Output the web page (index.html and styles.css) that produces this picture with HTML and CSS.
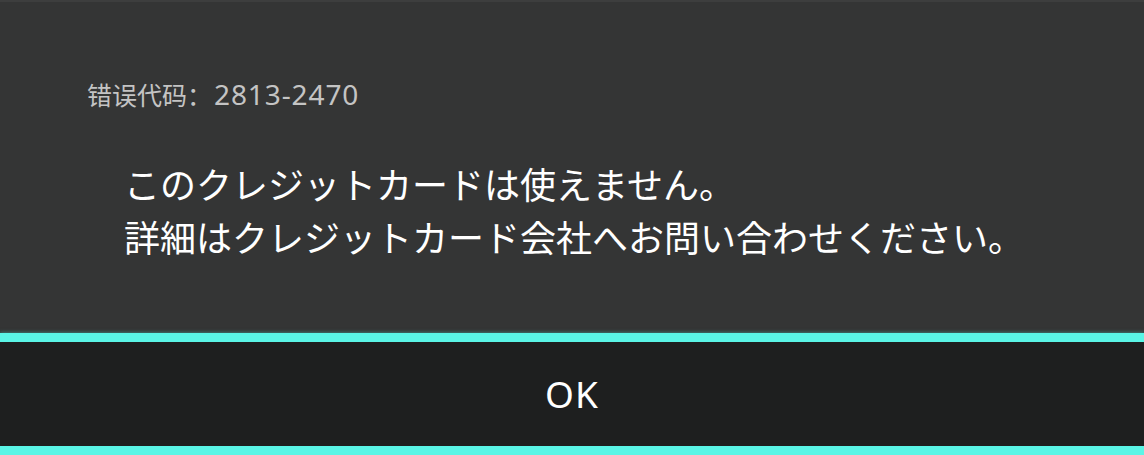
FILE: index.html
```html
<!DOCTYPE html>
<html lang="ja">
<head>
  <meta charset="UTF-8">
  <meta name="viewport" content="width=device-width, initial-scale=1.0">
  <title>エラー</title>
  <link rel="stylesheet" href="styles.css">
</head>
<body>
  <div class="dialog">
    <div class="message">
      <p class="error-code" lang="zh-CN">错误代码：<span class="code-num">2813-2470</span></p>
      <p class="text">このクレジットカードは使えません。<br>詳細はクレジットカード会社へお問い合わせください。</p>
    </div>
    <div class="actions">
      <button type="button" class="ok">OK</button>
    </div>
  </div>
</body>
</html>
```

FILE: styles.css
```css
body {
    margin: 0;
    background-color: #343535;
    font-family: "Noto Sans CJK JP", "Noto Sans", sans-serif;
    overflow: hidden;
}

.dialog {
    width: 1144px;
    height: 455px;
    display: flex;
    flex-direction: column;
}

.message {
    height: 333px;
    box-sizing: border-box;
    border-top: 2px solid #3d3e3e;
    padding-top: 78px;
}

.error-code {
    margin: 0 0 0 87px;
    font-family: "Noto Sans CJK SC", sans-serif;
    font-size: 25px;
    line-height: 28px;
    color: #c4c4c4;
}

.code-num {
    font-family: "Noto Sans", sans-serif;
    font-size: 28px;
    letter-spacing: 0.9px;
    margin-left: 2px;
}

.text {
    margin: 49px 0 0 124px;
    font-size: 36px;
    line-height: 53px;
    color: #ffffff;
}

.actions {
    height: 104px;
    background-color: #1e1f1f;
    border-top: 9px solid #5af5e6;
    border-bottom: 9px solid #5af5e6;
    box-shadow: 0 0 4px rgba(90, 245, 230, 0.5);
    display: flex;
    align-items: center;
    justify-content: center;
}

.ok {
    background: none;
    border: none;
    padding: 0;
    color: #ffffff;
    font-family: "Noto Sans", sans-serif;
    font-size: 37px;
    letter-spacing: 1px;
    line-height: 40px;
    cursor: pointer;
}
```
